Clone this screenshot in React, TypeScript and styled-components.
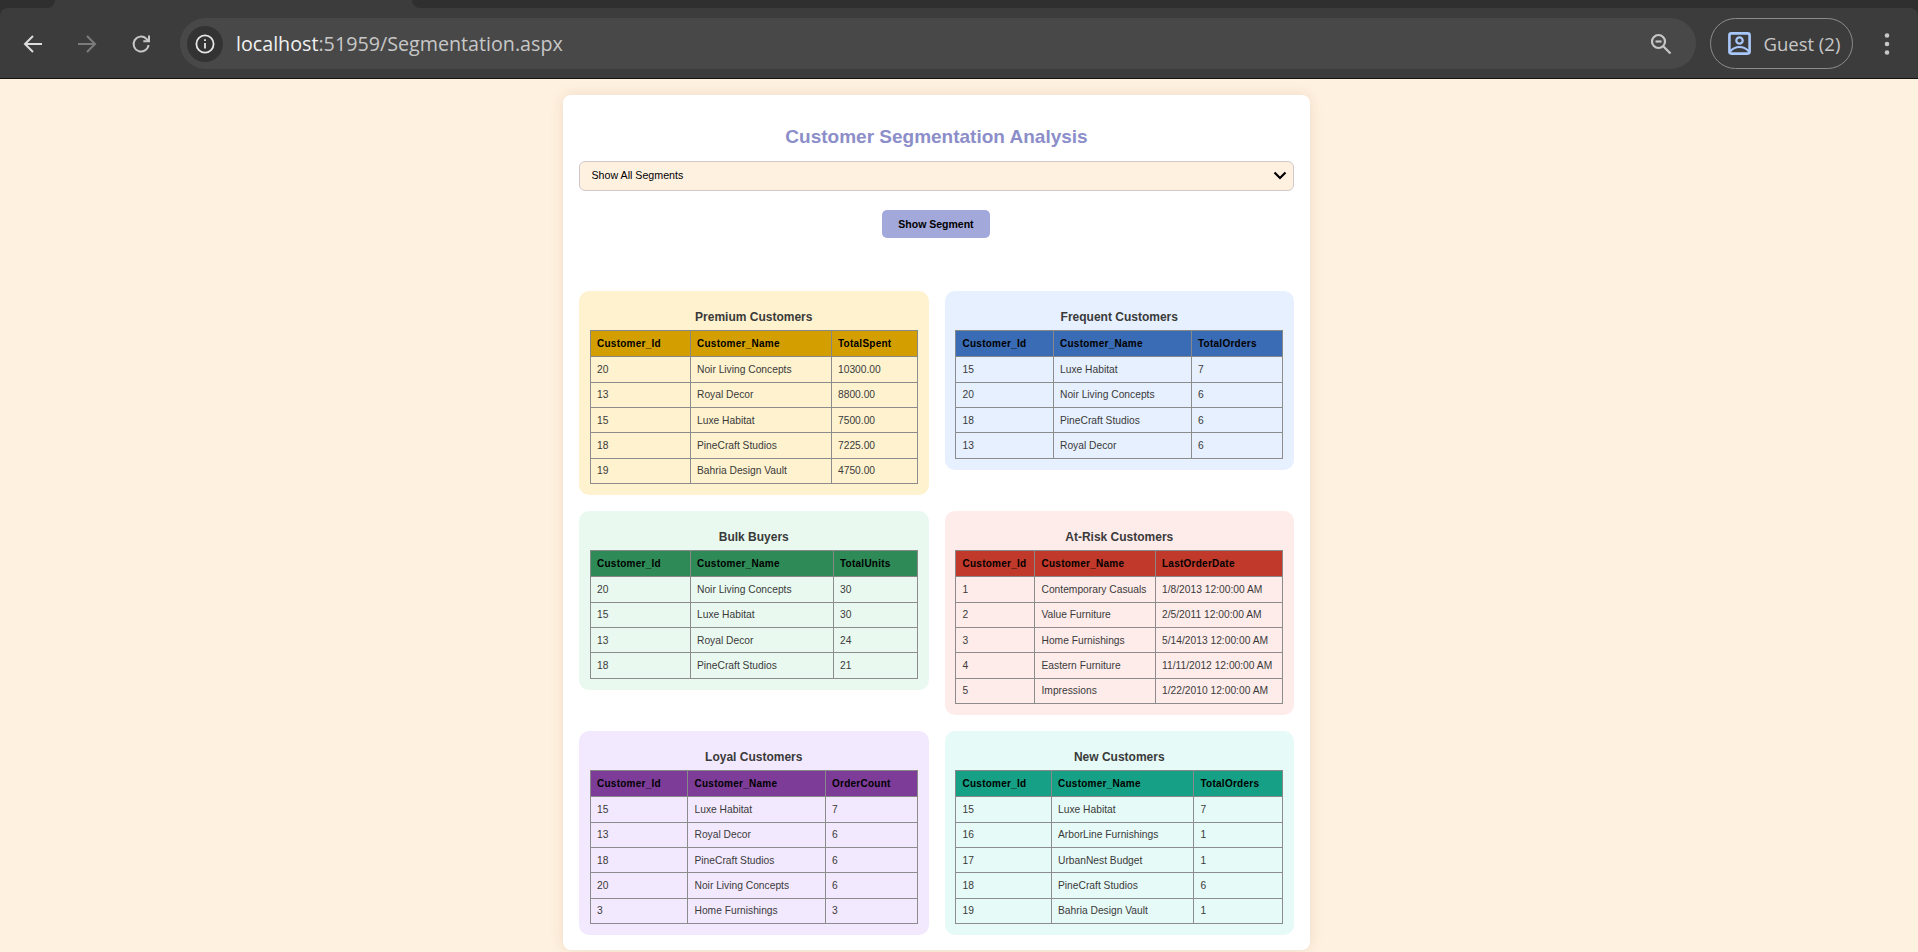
import React from "react";
import styled, { createGlobalStyle } from "styled-components";

const Global = createGlobalStyle`
  html, body { margin: 0; padding: 0; background: #fff1e0; }
  body { font-family: "Liberation Sans", Arial, sans-serif; }
  * { box-sizing: border-box; }
`;

const Page = styled.div`
  width: 1918px;
  height: 952px;
  overflow: hidden;
  display: flex;
  flex-direction: column;
  background: #fff1e0;
`;

const Chrome = styled.header`
  height: 79px;
  flex: none;
  display: flex;
  flex-direction: column;
  background: #2f2f2f;
  border-bottom: 1px solid #111;
`;

const TabStrip = styled.div`
  height: 8px;
  flex: none;
  display: flex;
  background: #3c3c3c;
`;

const StripLeft = styled.div`
  width: 55px;
  background: #2f2f2f;
  border-bottom-right-radius: 8px;
`;

const ActiveTab = styled.div`
  width: 357px;
`;

const StripRight = styled.div`
  flex: 1;
  background: #2f2f2f;
  border-bottom-left-radius: 8px;
`;

const Toolbar = styled.div`
  flex: 1;
  display: flex;
  align-items: center;
  background: #3c3c3c;
  padding: 1px 0 0 0;
  border-top-left-radius: 8px;
  border-top-right-radius: 8px;
`;

const NavButton = styled.div<{ $w: number }>`
  width: ${(p) => p.$w}px;
  flex: none;
  display: flex;
  justify-content: center;
`;

const Omnibox = styled.div`
  width: 1516px;
  height: 51px;
  flex: none;
  background: #484848;
  border-radius: 26px;
  display: flex;
  align-items: center;
  padding: 0 24px 0 7px;
`;

const InfoChip = styled.div`
  width: 36px;
  height: 36px;
  border-radius: 50%;
  background: #333;
  display: flex;
  align-items: center;
  justify-content: center;
  flex: none;
`;

const Url = styled.div`
  margin-left: 13px;
  font-family: "Open Sans", sans-serif;
  font-size: 19.7px;
  color: #c7c7c7;
  flex: 1;
  white-space: nowrap;
`;

const Host = styled.span`
  color: #f1f1f1;
`;

const GuestPill = styled.div`
  width: 143px;
  height: 51px;
  margin-left: 14px;
  flex: none;
  border: 1.5px solid #8c8c8c;
  border-radius: 26px;
  display: flex;
  align-items: center;
  padding-left: 17.5px;
  gap: 12px;
  font-family: "Open Sans", sans-serif;
  font-size: 18.5px;
  color: #c7c7c7;
  white-space: nowrap;
`;

const Menu = styled.div`
  width: 65px;
  flex: none;
  display: flex;
  justify-content: center;
  padding-left: 3px;
`;

const Content = styled.main`
  flex: 1;
  display: flex;
  padding: 16px 0 0 563px;
`;

const Card = styled.div`
  width: 747px;
  height: 855px;
  background: #fff;
  border-radius: 8px;
  box-shadow: 0 0 14px rgba(170, 130, 90, 0.2);
  padding: 0 16px;
`;

const Title = styled.h2`
  margin: 0;
  padding-top: 29.5px;
  height: 66px;
  text-align: center;
  font-size: 19px;
  line-height: 24px;
  font-weight: 700;
  color: #8c8ec9;
`;

const Select = styled.div`
  height: 30px;
  background: #fff1e0;
  border: 1px solid #cfc9cc;
  border-radius: 6px;
  display: flex;
  align-items: center;
  justify-content: space-between;
  padding: 0 6px 1.5px 11.5px;
  font-size: 10.67px;
  color: #000;
`;

const ButtonRow = styled.div`
  display: flex;
  justify-content: center;
  padding: 19px 1px 0 0;
  height: 100px;
`;

const ShowButton = styled.button`
  width: 108px;
  height: 27.5px;
  border: 0;
  border-radius: 5px;
  background: #a3a8db;
  color: #000;
  font-family: inherit;
  font-size: 10.5px;
  font-weight: 700;
  padding: 0;
`;

const Grid = styled.div`
  display: grid;
  grid-template-columns: 349.5px 349.5px;
  column-gap: 16px;
  grid-auto-rows: 220px;
  align-items: start;
`;

const Panel = styled.section<{ $bg: string }>`
  background: ${(p) => p.$bg};
  border-radius: 10px;
  padding: 0 10.5px 11.5px;
`;

const PanelTitle = styled.h3`
  margin: 0;
  height: 39px;
  padding-top: 18px;
  text-align: center;
  font-size: 12px;
  line-height: 16px;
  font-weight: 700;
  color: #3a3a3a;
`;

const Table = styled.table`
  width: 326.5px;
  table-layout: fixed;
  border-collapse: collapse;
  font-size: 10.25px;
  color: #3a3a3a;
`;

const Head = styled.th<{ $bg: string }>`
  height: 26.4px;
  background: ${(p) => p.$bg};
  border: 1.2px solid #888;
  padding: 0 6.5px;
  text-align: left;
  font-size: 10px;
  letter-spacing: 0.25px;
  font-weight: 700;
  color: #000;
  white-space: nowrap;
`;

const Cell = styled.td`
  height: 25.3px;
  border: 1px solid #8c8c8c;
  padding: 0 6.5px;
  white-space: nowrap;
`;

const Chevron = () => (
  <svg width="14" height="9" viewBox="0 0 14 9" fill="none" stroke="#000" strokeWidth="2.2">
    <path d="M1.5 1.5 7 7l5.5-5.5" />
  </svg>
);

const BackIcon = () => (
  <svg width="20" height="20" viewBox="0 0 20 20" fill="none" stroke="#dcdcdc" strokeWidth="2">
    <path d="M19 10H2.5M10 2 2 10l8 8" />
  </svg>
);

const ForwardIcon = () => (
  <svg width="20" height="20" viewBox="0 0 20 20" fill="none" stroke="#7b7b7b" strokeWidth="2">
    <path d="M1 10h16.5M10 2l8 8-8 8" />
  </svg>
);

const ReloadIcon = () => (
  <svg width="20" height="20" viewBox="0 0 20 20" fill="none" stroke="#c7c7c7" strokeWidth="2">
    <path d="M17.5 11a7.5 7.5 0 1 1-2.2-6.3L18 7.2" />
    <path d="M18 1.5v5.700h-5.700" />
  </svg>
);

const InfoIcon = () => (
  <svg width="20" height="20" viewBox="0 0 20 20" fill="none" stroke="#e6e6e6" strokeWidth="1.8">
    <circle cx="10" cy="10" r="8.6" />
    <path d="M10 9v5.5" />
    <path d="M10 5.2v1.9" />
  </svg>
);

const ZoomOutIcon = () => (
  <svg width="22" height="22" viewBox="0 0 22 22" fill="none" stroke="#c7c7c7" strokeWidth="2.2">
    <circle cx="8.5" cy="8.5" r="6.5" />
    <path d="M5.5 8.5h6" />
    <path d="m13.5 13.5 7 7" />
  </svg>
);

const GuestIcon = () => (
  <svg width="23" height="23" viewBox="0 0 23 23" fill="none" stroke="#a8c7fa" strokeWidth="2.6">
    <rect x="1.4" y="1.4" width="20.2" height="20.2" rx="2" />
    <circle cx="11.5" cy="8.5" r="3.2" strokeWidth="2.2" />
    <path d="M2 19.5c3-3.4 6-4.5 9.5-4.5s6.5 1.1 9.5 4.5" strokeWidth="2.2" />
  </svg>
);

const MenuIcon = () => (
  <svg width="6" height="22" viewBox="0 0 6 22" fill="#c7c7c7">
    <circle cx="3" cy="2.5" r="2.3" />
    <circle cx="3" cy="11" r="2.3" />
    <circle cx="3" cy="19.5" r="2.3" />
  </svg>
);

type Segment = {
  title: string;
  bg: string;
  head: string;
  metric: string;
  cols: number[];
  rows: [string, string, string][];
};

const segments: Segment[] = [
  {
    title: "Premium Customers", bg: "#fef2cf", head: "#d39e00", metric: "TotalSpent", cols: [100, 141, 86],
    rows: [
      ["20", "Noir Living Concepts", "10300.00"],
      ["13", "Royal Decor", "8800.00"],
      ["15", "Luxe Habitat", "7500.00"],
      ["18", "PineCraft Studios", "7225.00"],
      ["19", "Bahria Design Vault", "4750.00"],
    ],
  },
  {
    title: "Frequent Customers", bg: "#e6f0ff", head: "#3a6bb5", metric: "TotalOrders", cols: [97.5, 138, 91.5],
    rows: [
      ["15", "Luxe Habitat", "7"],
      ["20", "Noir Living Concepts", "6"],
      ["18", "PineCraft Studios", "6"],
      ["13", "Royal Decor", "6"],
    ],
  },
  {
    title: "Bulk Buyers", bg: "#e9f9f0", head: "#2e8b57", metric: "TotalUnits", cols: [100, 143, 84],
    rows: [
      ["20", "Noir Living Concepts", "30"],
      ["15", "Luxe Habitat", "30"],
      ["13", "Royal Decor", "24"],
      ["18", "PineCraft Studios", "21"],
    ],
  },
  {
    title: "At-Risk Customers", bg: "#feecea", head: "#c0392b", metric: "LastOrderDate", cols: [79, 120.5, 127.5],
    rows: [
      ["1", "Contemporary Casuals", "1/8/2013 12:00:00 AM"],
      ["2", "Value Furniture", "2/5/2011 12:00:00 AM"],
      ["3", "Home Furnishings", "5/14/2013 12:00:00 AM"],
      ["4", "Eastern Furniture", "11/11/2012 12:00:00 AM"],
      ["5", "Impressions", "1/22/2010 12:00:00 AM"],
    ],
  },
  {
    title: "Loyal Customers", bg: "#f3e9fe", head: "#7d3c98", metric: "OrderCount", cols: [97.5, 137.5, 92],
    rows: [
      ["15", "Luxe Habitat", "7"],
      ["13", "Royal Decor", "6"],
      ["18", "PineCraft Studios", "6"],
      ["20", "Noir Living Concepts", "6"],
      ["3", "Home Furnishings", "3"],
    ],
  },
  {
    title: "New Customers", bg: "#e6faf7", head: "#16a085", metric: "TotalOrders", cols: [95.5, 142.5, 89],
    rows: [
      ["15", "Luxe Habitat", "7"],
      ["16", "ArborLine Furnishings", "1"],
      ["17", "UrbanNest Budget", "1"],
      ["18", "PineCraft Studios", "6"],
      ["19", "Bahria Design Vault", "1"],
    ],
  },
];

export default function App() {
  return (
    <Page>
      <Global />
      <Chrome>
        <TabStrip>
          <StripLeft />
          <ActiveTab />
          <StripRight />
        </TabStrip>
        <Toolbar>
          <NavButton $w={66}><BackIcon /></NavButton>
          <NavButton $w={41.4}><ForwardIcon /></NavButton>
          <NavButton $w={67.2}><ReloadIcon /></NavButton>
          <NavButton $w={5.4} />
          <Omnibox>
            <InfoChip><InfoIcon /></InfoChip>
            <Url><Host>localhost</Host>:51959/Segmentation.aspx</Url>
            <ZoomOutIcon />
          </Omnibox>
          <GuestPill><GuestIcon />Guest (2)</GuestPill>
          <Menu><MenuIcon /></Menu>
        </Toolbar>
      </Chrome>
      <Content>
        <Card>
          <Title>Customer Segmentation Analysis</Title>
          <Select>Show All Segments<Chevron /></Select>
          <ButtonRow><ShowButton>Show Segment</ShowButton></ButtonRow>
          <Grid>
            {segments.map((s) => (
              <Panel key={s.title} $bg={s.bg}>
                <PanelTitle>{s.title}</PanelTitle>
                <Table>
                  <colgroup>
                    {s.cols.map((w, i) => (
                      <col key={i} style={{ width: w }} />
                    ))}
                  </colgroup>
                  <thead>
                    <tr>
                      <Head $bg={s.head}>Customer_Id</Head>
                      <Head $bg={s.head}>Customer_Name</Head>
                      <Head $bg={s.head}>{s.metric}</Head>
                    </tr>
                  </thead>
                  <tbody>
                    {s.rows.map((r) => (
                      <tr key={r[0]}>
                        {r.map((c, i) => (
                          <Cell key={i}>{c}</Cell>
                        ))}
                      </tr>
                    ))}
                  </tbody>
                </Table>
              </Panel>
            ))}
          </Grid>
        </Card>
      </Content>
    </Page>
  );
}
